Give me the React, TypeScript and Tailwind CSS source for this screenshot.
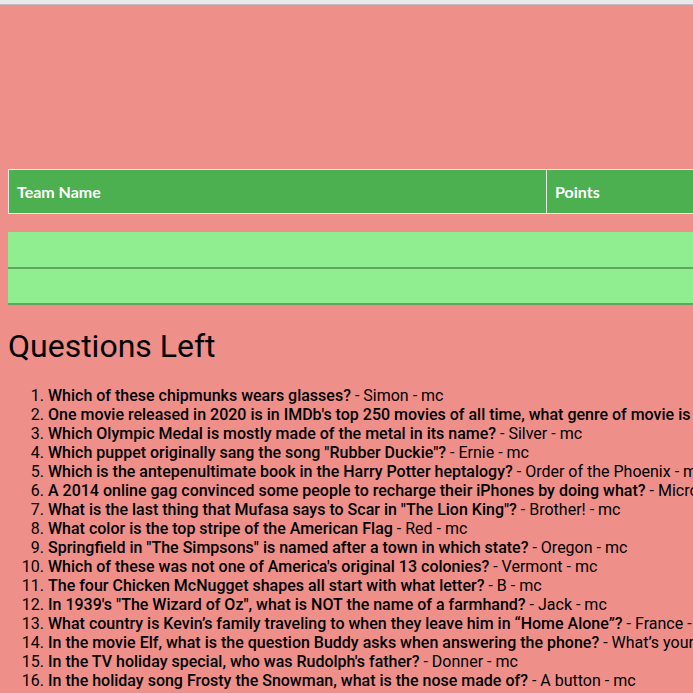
const questions: { q: string; a: string }[] = [
  { q: "Which of these chipmunks wears glasses?", a: "Simon" },
  {
    q: "One movie released in 2020 is in IMDb's top 250 movies of all time, what genre of movie is it?",
    a: "Animation",
  },
  { q: "Which Olympic Medal is mostly made of the metal in its name?", a: "Silver" },
  { q: 'Which puppet originally sang the song "Rubber Duckie"?', a: "Ernie" },
  { q: "Which is the antepenultimate book in the Harry Potter heptalogy?", a: "Order of the Phoenix" },
  {
    q: "A 2014 online gag convinced some people to recharge their iPhones by doing what?",
    a: "Microwaving them",
  },
  { q: 'What is the last thing that Mufasa says to Scar in "The Lion King"?', a: "Brother!" },
  { q: "What color is the top stripe of the American Flag", a: "Red" },
  { q: 'Springfield in "The Simpsons" is named after a town in which state?', a: "Oregon" },
  { q: "Which of these was not one of America's original 13 colonies?", a: "Vermont" },
  { q: "The four Chicken McNugget shapes all start with what letter?", a: "B" },
  { q: 'In 1939\'s "The Wizard of Oz", what is NOT the name of a farmhand?', a: "Jack" },
  { q: "What country is Kevin’s family traveling to when they leave him in “Home Alone”?", a: "France" },
  {
    q: "In the movie Elf, what is the question Buddy asks when answering the phone?",
    a: "What’s your favorite color?",
  },
  { q: "In the TV holiday special, who was Rudolph's father?", a: "Donner" },
  { q: "In the holiday song Frosty the Snowman, what is the nose made of?", a: "A button" },
];

const rows = [0, 1];

export default function App() {
  return (
    <div className="min-h-[693px] w-[693px] overflow-hidden bg-[#ee8f89] text-black">
      {/* top strip */}
      <div className="h-[5px] bg-[#e9e9e9] border-b border-[#bdbdbd]" />

      <div className="pl-[8px] pt-[164px]">
        {/* scoreboard header */}
        <div className="flex w-[900px] h-[45px] bg-[#4caf50] border border-[#e6e6e6] font-['Lato',sans-serif] font-bold text-[16px] text-white">
          <div className="w-[538px] shrink-0 flex items-center pl-[8px] border-r border-[#e6e6e6]">
            Team Name
          </div>
          <div className="flex-1 flex items-center pl-[8px]">Points</div>
        </div>

        {/* team rows */}
        <div className="mt-[18px] w-[900px]">
          {rows.map((r) => (
            <div key={r} className="h-[36.5px] bg-[#90ee90] border-b-2 border-[#5fa65f]" />
          ))}
        </div>

        {/* questions */}
        <h1 className="mt-[23px] font-['Roboto',sans-serif] text-[32px] leading-[37.5px]">
          Questions Left
        </h1>
        <ol className="mt-[20px] list-decimal pl-[40px] font-['Roboto',sans-serif] text-[16px] leading-[19px] whitespace-nowrap">
          {questions.map((item, i) => (
            <li key={i}>
              <span className="font-medium">{item.q}</span> - {item.a} - mc
            </li>
          ))}
        </ol>
      </div>
    </div>
  );
}
